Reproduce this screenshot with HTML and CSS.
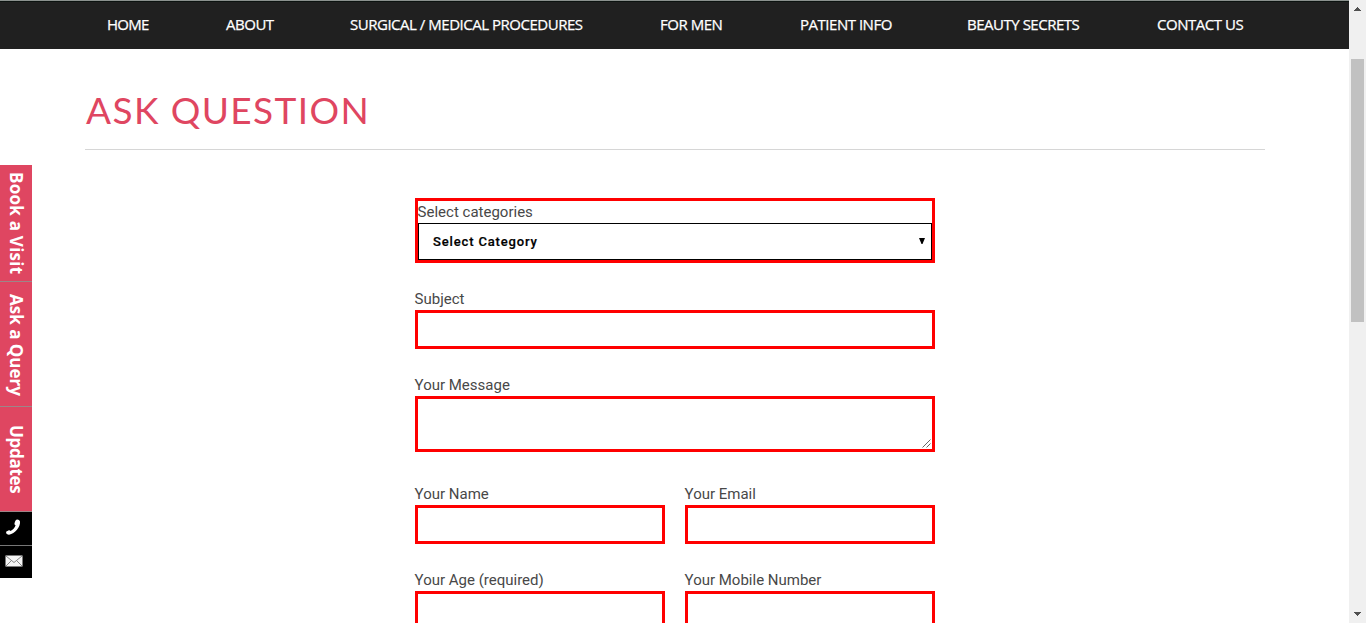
FILE: index.html
```html
<!DOCTYPE html>
<html lang="en">
<head>
<meta charset="utf-8">
<title>Ask Question</title>
<link rel="stylesheet" href="styles.css">
</head>
<body>
<div class="page">
  <nav class="nav">
    <a>HOME</a><a>ABOUT</a><a>SURGICAL / MEDICAL PROCEDURES</a><a>FOR MEN</a><a>PATIENT INFO</a><a>BEAUTY SECRETS</a><a>CONTACT US</a>
  </nav>
  <main class="main">
    <h1 class="title">ASK QUESTION</h1>
    <form class="form">
      <div class="category">
        <div class="label">Select categories</div>
        <div class="select"><span>Select Category</span><svg width="6" height="6" viewBox="0 0 6 6"><path d="M0 0h6L3.5 6h-1z" fill="#000"/></svg></div>
      </div>
      <div class="field"><div class="label">Subject</div><div class="input"></div></div>
      <div class="field message"><div class="label">Your Message</div>
        <div class="input area"><svg width="9" height="9" viewBox="0 0 9 9"><path d="M.5 8.5l8-8M4.500 8.500l4-4" fill="none" stroke="#555" stroke-width=".9"/></svg></div></div>
      <div class="pair">
        <div class="field"><div class="label">Your Name</div><div class="input"></div></div>
        <div class="field"><div class="label">Your Email</div><div class="input"></div></div>
        <div class="field"><div class="label">Your Age (required)</div><div class="input"></div></div>
        <div class="field"><div class="label">Your Mobile Number</div><div class="input"></div></div>
      </div>
    </form>
  </main>
</div>
<div class="scrollbar">
  <svg class="up" width="7" height="4" viewBox="0 0 7 4" shape-rendering="crispEdges"><path d="M3 0h1v1h1v1h1v1h1v1H0V3h1V2h1V1h1z" fill="#505050"/></svg>
  <div class="thumb"></div>
  <svg class="down" width="7" height="4" viewBox="0 0 7 4" shape-rendering="crispEdges"><path d="M0 0h7v1H6v1H5v1H4v1H3V3H2V2H1V1H0z" fill="#505050"/></svg>
</div>
<aside class="side">
  <a class="tab book"><span>Book a Visit</span></a>
  <a class="tab query"><span>Ask a Query</span></a>
  <a class="tab updates"><span>Updates</span></a>
  <a class="icon phone"><svg width="16" height="17" viewBox="0 0 16 17"><path d="M11.200.9c1.300-.8 3.400.1 3.800 1.700.6 5.300-5 12.200-10.900 13.100-1.500.1-3-1-3-2.300 0-.9 1-1.300 2.300-1.900.9-.4 1.500-.2 2.100.5 2.200-.8 4.400-3.400 5.100-5.700-.9-.4-1.300-.8-1.100-1.700.3-1.500.7-3.100 1.700-3.700z" fill="#fff"/></svg></a>
  <a class="icon mail"><svg width="18" height="12" viewBox="0 0 18 12"><path d="M.5.5h17v11H.5z" fill="#f5f5f5"/><path d="M1 1l8 6.500L17 1M1 11l5.500-5.500M17 11l-5.500-5.500" fill="none" stroke="#888" stroke-width="1"/></svg></a>
</aside>
</body>
</html>
```
FILE: styles.css
```css
* { box-sizing: border-box; }
body {
  margin: 0;
  height: 623px;
  overflow: hidden;
  display: flex;
  background: #fff;
  font-family: Roboto, sans-serif;
}
.page { width: 1349px; height: 623px; overflow: hidden; }
.nav {
  height: 49px;
  padding: 0 0 2px 107px;
  border-top: 1px solid #8b918e;
  box-shadow: inset 0 1px #0c1310;
  background: #202020;
  display: grid;
  grid-template-columns: 119px 124px 310px 140px 167px 190px 100px;
  align-items: center;
  color: #fff;
  font: 500 15px/20px "Open Sans", sans-serif;
  letter-spacing: -0.48px;
  -webkit-text-stroke: .25px #fff;
  white-space: nowrap;
}
.nav a:first-child { letter-spacing: -0.7px; }
.main { padding: 0 84px 0 85px; }
.title {
  margin: 0;
  height: 101px;
  padding: 37px 0 0 1px;
  border-bottom: 1px solid #d6d6d6;
  color: #df4661;
  font: 400 37px/48px Lato, sans-serif;
  letter-spacing: 1.4px;
}
.form { width: 520px; margin: 48px 0 0 330px; }
.label { height: 22px; margin-left: -.4px; color: #484848; font-size: 15px; line-height: 22px; white-space: nowrap; }
.category { height: 65px; border: 3px solid #f00; margin-bottom: 25px; }
.select {
  height: 37px;
  border: 1px solid #000;
  padding: 0 6px 0 14px;
  display: flex;
  align-items: center;
  justify-content: space-between;
  color: #000;
  font-size: 13px;
  font-weight: 500;
  letter-spacing: .85px;
  -webkit-text-stroke: .2px #000;
}
.select svg { margin-top: -2px; }
.field { margin-bottom: 25px; }
.input { height: 39px; border: 3px solid #f00; }
.message { margin-bottom: 31px; }
.area { height: 56px; display: flex; align-items: flex-end; justify-content: flex-end; padding: 0 1px 1px; }
.pair { display: grid; grid-template-columns: 250px 250px; column-gap: 20px; }
.scrollbar {
  width: 17px;
  height: 623px;
  padding: 7px 2px 7px;
  background: #f0f0f0;
  display: flex;
  flex-direction: column;
}
.scrollbar svg { display: block; margin-left: 3px; }
.thumb { width: 13px; height: 263px; margin-top: 48px; background: #c1c1c1; }
.down { margin-top: auto; }
.side { position: absolute; left: 0; top: 165px; width: 32px; height: 413px; display: flex; flex-direction: column; }
.tab {
  border-bottom: 1px solid #9d8588;
  background: #df4661;
  color: #fff;
  writing-mode: vertical-rl;
  font: 700 17px/31px "Open Sans", sans-serif;
  white-space: nowrap;
}
.book { height: 117px; padding-top: 7px; letter-spacing: .25px; }
.query { height: 125px; padding-top: 12px; }
.updates { height: 105px; padding-top: 18px; letter-spacing: -.3px; }
.icon { background: #000; display: flex; align-items: center; padding: 0 0 2px 5px; }
.phone { height: 34px; border-bottom: 1px solid #777; }
.mail { height: 32px; }
```
